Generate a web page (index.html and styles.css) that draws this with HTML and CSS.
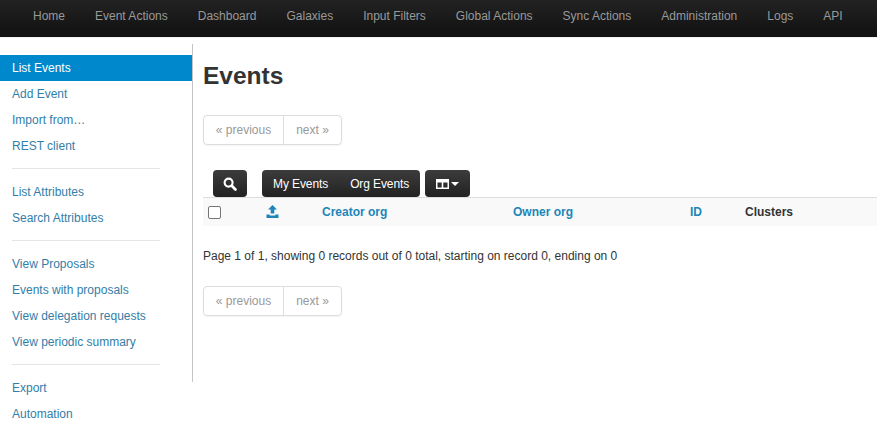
FILE: index.html
```html
<!DOCTYPE html>
<html lang="en">
<head>
    <meta charset="UTF-8">
    <title>Events</title>
    <link rel="stylesheet" href="styles.css">
</head>
<body>
    <nav class="topbar">
        <a>Home</a>
        <a>Event Actions</a>
        <a>Dashboard</a>
        <a>Galaxies</a>
        <a>Input Filters</a>
        <a>Global Actions</a>
        <a>Sync Actions</a>
        <a>Administration</a>
        <a>Logs</a>
        <a>API</a>
    </nav>

    <div class="page">
        <aside class="sidebar">
            <ul class="side-list">
                <li class="active"><a>List Events</a></li>
                <li><a>Add Event</a></li>
                <li><a>Import from…</a></li>
                <li><a>REST client</a></li>
                <li class="divider"></li>
                <li><a>List Attributes</a></li>
                <li><a>Search Attributes</a></li>
                <li class="divider"></li>
                <li><a>View Proposals</a></li>
                <li><a>Events with proposals</a></li>
                <li><a>View delegation requests</a></li>
                <li><a>View periodic summary</a></li>
                <li class="divider"></li>
                <li><a>Export</a></li>
                <li><a>Automation</a></li>
            </ul>
        </aside>

        <main class="content">
            <h1>Events</h1>

            <div class="pager">
                <span class="prev">« previous</span>
                <span class="next">next »</span>
            </div>

            <div class="toolbar">
                <button class="btn btn-search" aria-label="Search">
                    <svg width="14" height="14" viewBox="0 0 14 14">
                        <circle cx="5.6" cy="5.6" r="4" fill="none" stroke="#fff" stroke-width="2.1"/>
                        <path d="M8.8 8.8l3.6 3.6" stroke="#fff" stroke-width="2.8" stroke-linecap="round"/>
                    </svg>
                </button>
                <div class="btn-group">
                    <button class="btn">My Events</button>
                    <button class="btn">Org Events</button>
                </div>
                <button class="btn btn-columns" aria-label="Columns">
                    <svg width="13" height="10" viewBox="0 0 13 10">
                        <path fill="#fff" fill-rule="evenodd" d="M0 0h13v10H0zM1.5 3.4v5h4.2v-5zM7.3 3.4v5h4.2v-5z"/>
                    </svg>
                    <span class="caret"></span>
                </button>
            </div>

            <div class="table-head">
                <span class="col col-check"><span class="checkbox"></span></span>
                <span class="col col-publish">
                    <svg width="13" height="13" viewBox="0 0 13 13">
                        <path fill="#1d85b8" d="M6.5 0L11 4.6H8.3V8.4H4.7V4.6H2zM0.5 9.4h3.2v1h5.6v-1h3.2V13H0.5z"/>
                    </svg>
                </span>
                <a class="col col-creator">Creator org</a>
                <a class="col col-owner">Owner org</a>
                <a class="col col-id">ID</a>
                <span class="col col-clusters">Clusters</span>
            </div>

            <p class="summary">Page 1 of 1, showing 0 records out of 0 total, starting on record 0, ending on 0</p>

            <div class="pager">
                <span class="prev">« previous</span>
                <span class="next">next »</span>
            </div>
        </main>
    </div>
</body>
</html>
```

FILE: styles.css
```css
body {
    font-family: 'Liberation Sans', Arial, sans-serif;
    font-size: 12px;
    color: #333;
    background: #fff;
    margin: 0;
    height: 440px;
    overflow: hidden;
}

.topbar {
    display: flex;
    height: 37px;
    padding-left: 18px;
    background: linear-gradient(#222, #111);
    border-bottom: 1px solid #f2f2f2;
}

.topbar a {
    padding: 0 15px;
    line-height: 32px;
    color: #999;
    white-space: nowrap;
}

.page {
    display: flex;
    padding-top: 6px;
}

.sidebar {
    width: 192px;
    height: 338px;
    border-right: 1px solid #c4c4c4;
    flex-shrink: 0;
}

.side-list {
    list-style: none;
    margin: 11px 0 0;
    padding: 0;
}

.side-list li a {
    display: block;
    height: 26px;
    line-height: 26px;
    padding-left: 12px;
    color: #337ea8;
}

.side-list li.active a {
    background: #0088cc;
    color: #fff;
}

.side-list .divider {
    height: 1px;
    margin: 9px 32px 10px 12px;
    background: #e5e5e5;
}

.content {
    flex: 1;
    padding-left: 10px;
    min-width: 0;
}

h1 {
    font-size: 24.5px;
    line-height: 40px;
    font-weight: 700;
    color: #333;
    margin: 12px 0 19px;
}

.pager {
    display: inline-flex;
    height: 30px;
    line-height: 28px;
    box-sizing: border-box;
    border: 1px solid #ddd;
    border-radius: 4px;
    box-shadow: 0 1px 2px rgba(0, 0, 0, 0.05);
    color: #999;
    vertical-align: top;
}

.pager .prev {
    width: 79px;
    text-align: center;
    border-right: 1px solid #ddd;
}

.pager .next {
    width: 57px;
    text-align: center;
}

.toolbar {
    display: flex;
    height: 27px;
    margin: 25px 0 0 10px;
}

.btn {
    font-family: inherit;
    font-size: 12px;
    letter-spacing: -0.1px;
    height: 27px;
    padding: 0 11px;
    border: none;
    color: #fff;
    background: linear-gradient(#3c3c3c, #222);
    white-space: nowrap;
}

.btn-search,
.btn-columns {
    border-radius: 4px;
    display: flex;
    align-items: center;
    justify-content: center;
}

.btn-search {
    width: 34px;
    padding: 0;
    margin-right: 15px;
}

.btn-columns {
    width: 45px;
    padding: 0;
    gap: 2px;
    margin-left: 5px;
}

.caret {
    width: 0;
    height: 0;
    border-left: 4px solid transparent;
    border-right: 4px solid transparent;
    border-top: 4px solid #fff;
}

.btn-group {
    display: flex;
    border-radius: 4px;
    overflow: hidden;
}

.table-head {
    position: relative;
    height: 29px;
    line-height: 29px;
    box-sizing: border-box;
    border-top: 1px solid #ddd;
    background: #f9f9f9;
    font-weight: 700;
}

.col {
    position: absolute;
    top: 0;
    color: #1d85b8;
}

.col-check {
    left: 5px;
    top: 8px;
    line-height: 0;
}

.checkbox {
    display: block;
    width: 13px;
    height: 13px;
    box-sizing: border-box;
    border: 1px solid #767676;
    border-radius: 2px;
    background: #fff;
}

.col-publish {
    left: 63px;
    top: 7px;
    line-height: 0;
}

.col-creator { left: 119px; }
.col-owner { left: 310px; }
.col-id { left: 487px; }
.col-clusters { left: 542px; color: #333; }

.summary {
    margin: 21px 0 21px;
    line-height: 18px;
}
```
